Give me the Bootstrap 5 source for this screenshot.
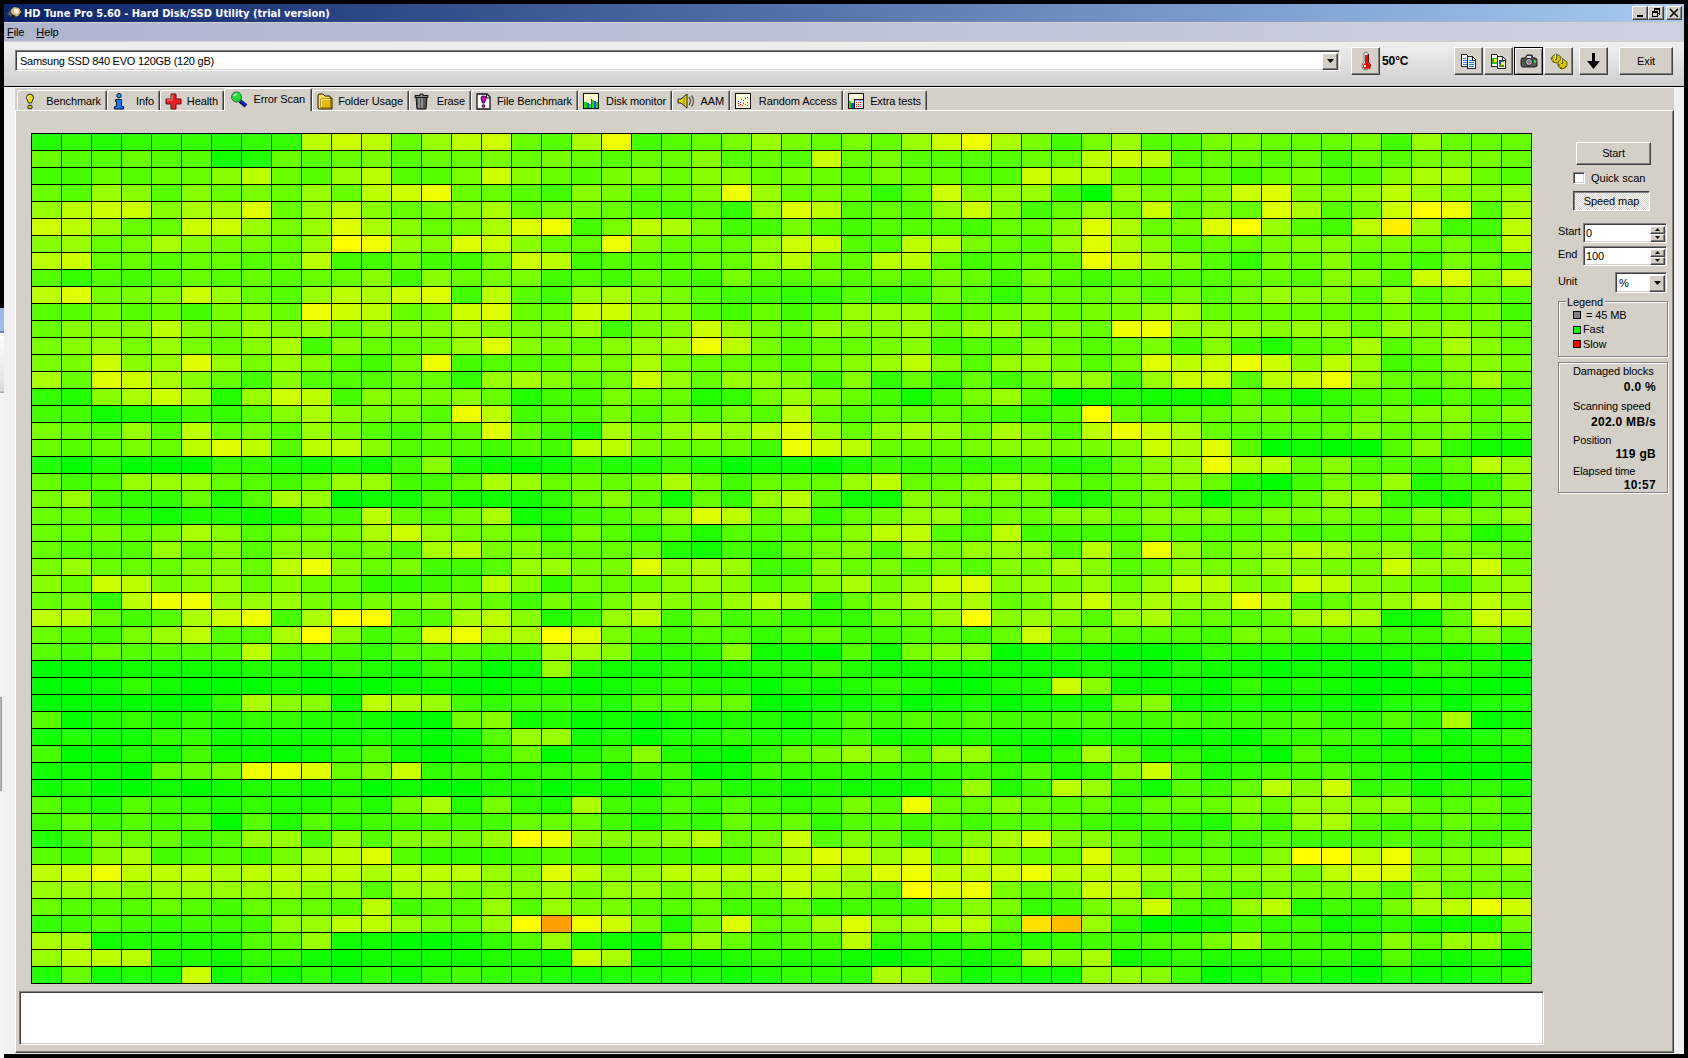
<!DOCTYPE html>
<html lang="en">

<head>
    <meta charset="UTF-8">
    <meta name="viewport" content="width=device-width, initial-scale=1.0">
    <title>HD Tune Pro 5.60 - Hard Disk/SSD Utility (trial version)</title>
    <link href="https://cdn.jsdelivr.net/npm/bootstrap@5.3.3/dist/css/bootstrap.min.css" rel="stylesheet">
    <style>
        body {
            width: 1688px;
            height: 1058px;
            overflow: hidden;
            background: #000;
            color: #000;
            font: 11px/13px "Liberation Sans", Arial, sans-serif;
            letter-spacing: -.1px;
            white-space: nowrap;
        }

        svg {
            display: block;
            flex: none;
        }

        /* sliver of the window behind */
        .behind {
            width: 4px;
            padding-top: 308px;
        }

        .behind-title {
            height: 25px;
            background: linear-gradient(#9ab8e6, #a3bde6 90%, #6d83b3 92%);
        }

        .behind-tools {
            height: 60px;
            background: linear-gradient(#fff, #dcdcdc 97%, #a0a0a0 98%);
        }

        .behind-body {
            background: #f3f3f3;
            padding-top: 304px;
        }

        .behind-scroll {
            width: 2px;
            height: 94px;
            background: #b8b8b8;
            border: solid #999;
            border-width: 1px 1px 1px 0;
        }

        .win {
            width: 1680px;
            height: 1050px;
            margin-top: 4px;
            background: #f0f0f0;
        }

        .titlebar {
            height: 19px;
            padding: 0 2px 0 3px;
            background: linear-gradient(90deg, #0a246a, #a6caf0);
            border-bottom: 1px solid #d4d0c8;
            color: #fff;
            font: bold 11px/17px "DejaVu Sans Condensed", "DejaVu Sans", sans-serif;
        }

        .titlebar-text {
            letter-spacing: .01px;
            padding: 1px 0 0 3px;
        }

        .menubar {
            height: 19px;
            padding: 3px 4px 0 3px;
            background: linear-gradient(90deg, #aeb5cd, #cdd1df);
            border-bottom: 1px solid #d4d0c8;
            gap: 12px;
            line-height: 13px;
        }

        .toolbar {
            height: 45px;
            padding: 5px 11px 0;
            background: linear-gradient(#f0f0f0, #cfcfcf);
            border-bottom: 1px solid #000;
        }

        .w-btn {
            display: flex;
            flex: none;
            align-items: center;
            justify-content: center;
            padding: 0;
            background: #d4d0c8;
            border: 1px solid;
            border-color: #fff #404040 #404040 #fff;
            box-shadow: inset -1px -1px #808080;
            color: #000;
            font: inherit;
            letter-spacing: inherit;
        }

        .w-caption {
            width: 16px;
            height: 14px;
        }

        .w-close {
            margin-left: 2px;
        }

        .w-tool {
            width: 29px;
            height: 28px;
        }

        .w-tool.current {
            border-color: #000;
            box-shadow: inset 1px 1px #fff, inset -1px -1px #808080;
        }

        .w-field {
            flex: none;
            background: #fff;
            border: 1px solid;
            border-color: #808080 #fff #fff #808080;
            box-shadow: inset 1px 1px #404040, inset -1px -1px #d4d0c8;
        }

        .drive {
            width: 1325px;
            height: 21px;
            margin-top: 3px;
            padding: 2px 1px 1px 4px;
            letter-spacing: -.25px;
        }

        .drop {
            width: 16px;
            height: 17px;
        }

        .temp-btn {
            margin-left: 11px;
        }

        .temp {
            width: 29px;
            padding: 8px 0 0 2px;
            font-weight: bold;
            font-size: 12px;
            letter-spacing: -.1px;
        }

        .tool-set {
            gap: 1px;
            margin-left: 45px;
        }

        .save-btn {
            margin: 0 11px 0 6px;
            padding-right: 1px;
        }

        .exit-btn {
            width: 54px;
            height: 28px;
        }

        .tabs {
            display: grid;
            grid-template-columns: 90px 53px 64px 88px 97px 62px 107px 94px 58px 113px 84px;
            align-items: end;
            height: 23px;
            margin: 0 10px 0 11px;
            padding-left: 2px;
            background: #d4d0c8;
            border-top: 1px solid #f4f4f4;
        }

        .w-tab {
            height: 20px;
            padding: 1px 5px 0 4px;
            border: 1px solid;
            border-color: #fff #404040 #fff #fff;
            border-bottom: 0;
            border-radius: 3px 2px 0 0;
            box-shadow: inset -1px 0 #808080;
        }

        .w-tab.active {
            height: 23px;
            margin-bottom: -1px;
            padding: 0 6px 2px 5px;
            background: #d4d0c8;
        }

        .panel-3d {
            height: 943px;
            margin: 0 10px 0 11px;
            padding: 22px 0 0 3px;
            gap: 14px;
            background: #d4d0c8;
            border: 1px solid;
            border-color: #fff #404040 #404040 #fff;
            box-shadow: inset -1px -1px #808080;
        }

        .scan-map {
            display: grid;
            grid-template-columns: repeat(50, 29px);
            grid-auto-rows: 16px;
            gap: 1px;
            width: 1501px;
            margin-left: 12px;
            padding: 1px;
            background: #000;
        }

        .memo {
            width: 1525px;
            height: 54px;
            margin-top: 7px;
        }

        .side {
            width: 110px;
            padding-top: 9px;
        }

        .side-btn {
            width: 75px;
            height: 23px;
            margin-left: 18px;
        }

        .quick {
            margin: 7px 0 7px 15px;
            gap: 6px;
            height: 12px;
            letter-spacing: 0;
        }

        .check-box {
            width: 12px;
            height: 12px;
        }

        .speed {
            width: 77px;
            height: 20px;
            margin: 0 0 12px 15px;
            background: repeating-conic-gradient(#fff 0 25%, #d4d0c8 0 50%) 0 0 / 2px 2px;
            border-color: #404040 #fff #fff #404040;
            box-shadow: inset 1px 1px #808080;
        }

        .range-row {
            margin-bottom: 3px;
            padding-right: 1px;
        }

        .range-row > span {
            padding-top: 2px;
        }

        .num {
            width: 84px;
            height: 20px;
            padding: 2px 1px 1px 2px;
        }

        .spin {
            width: 15px;
            height: 8px;
        }

        .unit {
            width: 52px;
            height: 21px;
            margin-top: 3px;
            padding: 2px 1px 1px 3px;
        }

        .group {
            border: 1px solid #808080;
            box-shadow: 1px 1px #fff, inset 1px 1px #fff;
        }

        .legend-group {
            height: 56px;
            margin-top: 8px;
            padding-left: 14px;
        }

        .legend-title {
            width: 39px;
            height: 12px;
            margin: -6px 0 0 -7px;
            padding-left: 1px;
            line-height: 13px;
            background: #d4d0c8;
        }

        .legend-row {
            height: 14.5px;
            gap: 2px;
        }

        .swatch {
            width: 8px;
            height: 8px;
            border: 1px solid #000;
        }

        .swatch-block {
            margin-right: 3px;
            background: #808080;
        }

        .swatch-fast {
            background: #0f0;
        }

        .swatch-slow {
            background: #f00;
        }

        .stats {
            display: grid;
            grid-template-rows: 16px 19px 16px 18px 14px 17px 14px 13px;
            height: 131px;
            margin-top: 5px;
            padding: 2px 11px 0 14px;
        }

        .stats b {
            text-align: right;
            font-size: 12px;
            letter-spacing: .3px;
        }
    </style>
</head>

<body class="d-flex">
    <div class="behind d-flex flex-column">
        <div class="behind-title"></div>
        <div class="behind-tools"></div>
        <div class="behind-body flex-grow-1">
            <div class="behind-scroll"></div>
        </div>
    </div>

    <div class="win">
        <div class="titlebar d-flex align-items-center">
            <svg width="14" height="14" viewBox="0 0 14 14">
                <path d="M0 8l5-6 4 2-5 7z" fill="#555" />
                <path d="M4 4l3-3 5 1 2 4-3 4-4 1-2-3z" fill="#e0b878" />
                <path d="M7 3l4 0 1 3-3 2-2-2z" fill="#fff0d0" />
                <path d="M5 8l4 2-3 3-2-1z" fill="#222" />
            </svg>
            <span class="titlebar-text flex-grow-1">HD Tune Pro 5.60 - Hard Disk/SSD Utility (trial version)</span>
            <div class="d-flex">
                <button class="w-btn w-caption" aria-label="Minimize"><svg width="12" height="10" shape-rendering="crispEdges"><path d="M3 7h6v2H3z" /></svg></button>
                <button class="w-btn w-caption" aria-label="Restore"><svg width="12" height="10" shape-rendering="crispEdges" fill="none" stroke="#000"><path d="M4 1.500h6M4 .5h6M4.500 1v2M9.500 1v5.500M8 5.500h2M2 4.500h6M2 3.500h6M2.500 4v5M7.500 4v5M2 8.500h6" /></svg></button>
                <button class="w-btn w-caption w-close" aria-label="Close"><svg width="12" height="10" stroke="#000" stroke-width="1.600"><path d="M2 1l8 8M10 1l-8 8" /></svg></button>
            </div>
        </div>

        <div class="menubar d-flex">
            <span><u>F</u>ile</span>
            <span><u>H</u>elp</span>
        </div>

        <div class="toolbar d-flex align-items-start">
            <div class="w-field drive d-flex align-items-center">
                <span class="flex-grow-1">Samsung SSD 840 EVO 120GB (120 gB)</span>
                <div class="w-btn drop"><svg width="7" height="4"><path d="M0 0h7L3.500 4z" /></svg></div>
            </div>
            <button class="w-btn w-tool temp-btn" aria-label="Temperature">
                <svg width="12" height="20" viewBox="0 0 12 20">
                    <path d="M4 2q2-2 4 0v9q3 2 2 5-2 3-4 3-4 0-4-4 0-2 2-4z" fill="#eee" stroke="#777" />
                    <path d="M5 4h3v8q2 1 2 3-1 3-4 3-3 0-3-3 0-2 2-3z" fill="#f00" />
                    <path d="M8.500 3v8l2 3-1 4" fill="none" stroke="#300" />
                    <path d="M4 14h2v2H4z" fill="#fff" />
                </svg>
            </button>
            <span class="temp">50°C</span>
            <div class="d-flex tool-set">
                <button class="w-btn w-tool" aria-label="Copy text">
                    <svg width="17" height="17" viewBox="0 0 17 17" shape-rendering="crispEdges">
                        <path d="M1.500 1.500h5l3 3v9h-8z" fill="#fff" stroke="#222" />
                        <path d="M3 5h3M3 7h4M3 9h4M3 11h4" stroke="#28f" />
                        <path d="M7.500 3.500h5l3 3v9h-8z" fill="#fff" stroke="#222" />
                        <path d="M12.500 3v4h3" fill="none" stroke="#222" />
                        <path d="M9 7.500h3M9 9.500h5M9 11.500h5M9 13.500h5" stroke="#17e" />
                    </svg>
                </button>
                <button class="w-btn w-tool" aria-label="Copy picture">
                    <svg width="17" height="17" viewBox="0 0 17 17" shape-rendering="crispEdges">
                        <path d="M1.500 1.500h5l3 3v9h-8z" fill="#fff" stroke="#222" />
                        <path d="M2 5h5v6H2z" fill="#2b2" />
                        <path d="M4 6h3v3H4z" fill="#ff0" />
                        <path d="M7.500 3.500h5l3 3v9h-8z" fill="#fff" stroke="#222" />
                        <path d="M12.500 3v4h3" fill="none" stroke="#222" />
                        <path d="M9 8h5v6H9z" fill="#1b1" />
                        <path d="M9 7h3v4H9z" fill="#14f" />
                        <path d="M11 9h3v3h-3z" fill="#ff0" />
                        <path d="M12 12h2v2h-2z" fill="#f30" />
                    </svg>
                </button>
                <button class="w-btn w-tool current" aria-label="Screenshot">
                    <svg width="18" height="15" viewBox="0 0 18 15">
                        <path d="M5 4l2-3h5l1 3h3l1 2v6l-2 1H2l-1-2V6l1-2z" fill="#555" stroke="#222" />
                        <path d="M7 2h4v2H7z" fill="#ddd" />
                        <circle cx="9" cy="8" r="3.500" fill="#bbb" stroke="#222" />
                        <circle cx="9" cy="8" r="1.800" fill="#777" />
                        <path d="M14 6h2v3h-2z" fill="#2d4" />
                    </svg>
                </button>
                <button class="w-btn w-tool" aria-label="Options">
                    <svg width="18" height="17" viewBox="0 0 18 17">
                        <path d="M2 4l2-2 2-1 4 2 1 3-1 3-3 1-4-1-2-3z" fill="#d8c800" stroke="#6b6000" />
                        <path d="M8 9l2-2 3-1 4 3 0 4-2 2-4 1-3-3z" fill="#d8c800" stroke="#6b6000" />
                        <path d="M1 5h2M3 9l1-1M11 4l-1 1M8 12h2M11 16v-2M16 14l-1-1" stroke="#6b6000" stroke-width="1.500" />
                        <path d="M6 1v6M12 5v6" stroke="#555" stroke-width="2" />
                        <path d="M5.500 1v5M11.500 5v5" stroke="#ddd" />
                    </svg>
                </button>
            </div>
            <button class="w-btn w-tool save-btn" aria-label="Save">
                <svg width="14" height="17"><path d="M6 0h3v8h5l-6.500 8L1 8h5z" /></svg>
            </button>
            <button class="w-btn exit-btn">Exit</button>
        </div>

        <div class="tabs">
            <div class="w-tab d-flex align-items-center justify-content-between">
                <svg width="18" height="17" viewBox="0 0 18 17">
                    <path d="M4.500 5q0-4 3.500-4t3.500 4L9.500 10h-3z" fill="#e8e000" stroke="#222" />
                    <path d="M6 3v3" stroke="#fff" />
                    <ellipse cx="8" cy="14" rx="2.300" ry="1.800" fill="#d8d000" stroke="#222" />
                </svg>
                <span>Benchmark</span>
            </div>
            <div class="w-tab d-flex align-items-center justify-content-between">
                <svg width="14" height="17" viewBox="0 0 14 17">
                    <circle cx="7" cy="2.700" r="2.200" fill="#29f" stroke="#013" />
                    <path d="M3.500 6.500h6v7h2v2.500h-9v-2.500h2V8.500h-1z" fill="#17f" stroke="#013" />
                </svg>
                <span>Info</span>
            </div>
            <div class="w-tab d-flex align-items-center justify-content-between">
                <svg width="17" height="17" viewBox="0 0 17 17">
                    <path d="M6 1h5v5h5v5h-5v5H6v-5H1V6h5z" fill="#e22" stroke="#611" />
                    <path d="M7 2v5H2" fill="none" stroke="#f88" />
                </svg>
                <span>Health</span>
            </div>
            <div class="w-tab active d-flex align-items-center justify-content-between">
                <svg width="18" height="17" viewBox="0 0 18 17">
                    <path d="M10 10l6 5" stroke="#013" stroke-width="4" />
                    <path d="M10.500 10l5 4.500" stroke="#12e" stroke-width="2" />
                    <circle cx="6.500" cy="6" r="5" fill="#2d3" stroke="#174" />
                    <path d="M4 5q1-2 3-2" fill="none" stroke="#cfc" stroke-width="1.500" />
                </svg>
                <span>Error Scan</span>
            </div>
            <div class="w-tab d-flex align-items-center justify-content-between">
                <svg width="16" height="17" viewBox="0 0 16 17">
                    <path d="M1 15V2l1-1h4l2 2h5v2h2v11H2z" fill="#fd5" stroke="#221a00" />
                    <path d="M4 6h10v9H4z" fill="#e8b818" stroke="#765200" />
                    <path d="M4.500 14V6.500H13" fill="none" stroke="#ffec90" />
                </svg>
                <span>Folder Usage</span>
            </div>
            <div class="w-tab d-flex align-items-center justify-content-between">
                <svg width="15" height="17" viewBox="0 0 15 17">
                    <path d="M2 4h11l-1 12H3z" fill="#555" stroke="#111" />
                    <path d="M5 5v10M8 5v10" stroke="#ccc" />
                    <path d="M1 2.500h5V1h3v1.500h5V4.500H1z" fill="#888" stroke="#111" />
                </svg>
                <span>Erase</span>
            </div>
            <div class="w-tab d-flex align-items-center justify-content-between">
                <svg width="15" height="17" viewBox="0 0 15 17">
                    <path d="M1 1h10l3 3v12H1z" fill="#fff" stroke="#111" stroke-width="1.300" />
                    <path d="M10.500 1v4H14" fill="none" stroke="#111" />
                    <path d="M5 5q0-2 2.500-2T10 5l-1.500 5h-2z" fill="#d0c" stroke="#303" />
                    <circle cx="7.500" cy="13" r="1.500" fill="#b0a" stroke="#303" stroke-width=".7" />
                </svg>
                <span>File Benchmark</span>
            </div>
            <div class="w-tab d-flex align-items-center justify-content-between">
                <svg width="17" height="17" viewBox="0 0 17 17" shape-rendering="crispEdges">
                    <path d="M.5 .5h15v15H.5z" fill="#ffc" stroke="#111" />
                    <path d="M1 9h3v6H1zM6 11h2v4H6zM9 7h2v8H9zM13 9h2v6h-2z" fill="#1d1" />
                    <path d="M4 10h2v5H4zM8 6h1v9H8zM11 8h2v7h-2z" fill="#24e" />
                </svg>
                <span>Disk monitor</span>
            </div>
            <div class="w-tab d-flex align-items-center justify-content-between">
                <svg width="18" height="17" viewBox="0 0 18 17">
                    <path d="M1 6h3l6-5v14l-6-5H1z" fill="#e8d800" stroke="#222" />
                    <path d="M7 4v8" stroke="#887800" />
                    <path d="M12 4q3 4 0 8M14.500 2.500q4 5.500 0 11" fill="none" stroke="#555" stroke-width="1.300" />
                </svg>
                <span>AAM</span>
            </div>
            <div class="w-tab d-flex align-items-center justify-content-between">
                <svg width="17" height="17" viewBox="0 0 17 17" shape-rendering="crispEdges">
                    <path d="M.5 .5h15v15H.5z" fill="#ffd" stroke="#111" />
                    <path d="M3 8h1v1H3zM6 6h1v1H6zM8 7h1v1H8zM10 5h1v1h-1zM12 4h1v1h-1zM5 9h1v1H5z" fill="#24e" />
                    <path d="M3 12h1v1H3zM5 11h1v1H5zM7 12h1v1H7zM8 10h1v1H8zM10 11h1v1h-1zM12 9h1v1h-1zM12 12h1v1h-1zM3 10h1v1H3z" fill="#e22" />
                </svg>
                <span>Random Access</span>
            </div>
            <div class="w-tab d-flex align-items-center justify-content-between">
                <svg width="17" height="17" viewBox="0 0 17 17" shape-rendering="crispEdges">
                    <path d="M.5 .5h15v15H.5z" fill="#ffd" stroke="#111" />
                    <path d="M1 8h2v7H1z" fill="#1d1" />
                    <path d="M3 10h3v5H3z" fill="#24e" />
                    <path d="M6.500 6.500h9v9h-9z" fill="#fff" stroke="#111" />
                    <path d="M7 7h8v1H7z" fill="#99f" />
                    <path d="M8 9.500h6M8 11.500h6M8 13.500h6" stroke="#d33" stroke-dasharray="1 1" />
                </svg>
                <span>Extra tests</span>
            </div>
        </div>

        <div class="panel-3d d-flex">
            <div>
                <div class="scan-map" id="scanMap"></div>
                <div class="w-field memo"></div>
            </div>

            <div class="side">
                <button class="w-btn side-btn">Start</button>
                <div class="quick d-flex align-items-center">
                    <div class="w-field check-box"></div>
                    <span>Quick scan</span>
                </div>
                <button class="w-btn speed">Speed map</button>

                <div class="range-row d-flex justify-content-between">
                    <span>Start</span>
                    <div class="w-field num d-flex align-items-center justify-content-between">
                        <span>0</span>
                        <div>
                            <div class="w-btn spin"><svg width="5" height="3"><path d="M0 3h5L2.500 0z" /></svg></div>
                            <div class="w-btn spin"><svg width="5" height="3"><path d="M0 0h5L2.500 3z" /></svg></div>
                        </div>
                    </div>
                </div>
                <div class="range-row d-flex justify-content-between">
                    <span>End</span>
                    <div class="w-field num d-flex align-items-center justify-content-between">
                        <span>100</span>
                        <div>
                            <div class="w-btn spin"><svg width="5" height="3"><path d="M0 3h5L2.500 0z" /></svg></div>
                            <div class="w-btn spin"><svg width="5" height="3"><path d="M0 0h5L2.500 3z" /></svg></div>
                        </div>
                    </div>
                </div>
                <div class="range-row d-flex justify-content-between">
                    <span class="mt-1">Unit</span>
                    <div class="w-field unit d-flex align-items-center justify-content-between">
                        <span>%</span>
                        <div class="w-btn drop"><svg width="7" height="4"><path d="M0 0h7L3.500 4z" /></svg></div>
                    </div>
                </div>

                <div class="group legend-group">
                    <div class="legend-title">Legend</div>
                    <div class="legend-row d-flex align-items-center"><i class="swatch swatch-block"></i><span>= 45 MB</span></div>
                    <div class="legend-row d-flex align-items-center"><i class="swatch swatch-fast"></i><span>Fast</span></div>
                    <div class="legend-row d-flex align-items-center"><i class="swatch swatch-slow"></i><span>Slow</span></div>
                </div>

                <div class="group stats">
                    <span>Damaged blocks</span>
                    <b>0.0 %</b>
                    <span>Scanning speed</span>
                    <b>202.0 MB/s</b>
                    <span>Position</span>
                    <b>119 gB</b>
                    <span>Elapsed time</span>
                    <b>10:57</b>
                </div>
            </div>
        </div>
    </div>

    <script src="https://cdn.jsdelivr.net/npm/bootstrap@5.3.3/dist/js/bootstrap.bundle.min.js"></script>

    <script>
        // one character per block: 0-f goes from green to yellow, g-j from yellow to orange
        const rows = `
232333233bcb69bc65ae4567976769cea74795577666749666
65565512656756676765668565c67555566bcb566564657776
4465668b659b557c86578688676576655cbb6566467558aa65
65985867696bce665487568e967636c899409778cd889b9889
9bcc8aad69b8678a677654539db5659c84697c686da57cfe5a
cb966cc979da867ade47ba7447545554668da67df954bg944b
8967a87769fe98dc866e86669cc55bb7659da856678877675b
bc6656656b446447cb4555669b76bb64566eca853768564765
5354565656684867745465475565657647545555665885cd8c
bd778c9659bacd4b549a875443353475366675757988595765
557564786ecb67cd66cc985464699956786779a66666676674
6888b87989688898779478c9769889799686ee999899698976
78979768a486679d87689aeb75667845586567484256a57a86
77c89d9798547e455587a76665789b8599757dbcec8b945887
a6dca86485556639a867c96998483636469949cc5bce9667a6
328aca29cb4877862447662379864147950121115313453544
441224358a8775eb455757575b656665435f65667765778868
76595b675975466d642a79a9bd969a97a85beca65556866755
65676bdb5bb8555454bb76664ecb666788778cad5010058311
202000332121482101322420110243433423689ebb685546b9
645999654699446a96767a746669b668a96568862047692438
79433625a9011411136851639b511877661256403369a32156
66431221154b657a124579db69367995768868886877658879
66767a85777ac977637535255568bb55b44446555645557624
6555968588675ab78666721436785979995b6e9689ba895876
79666886be8674459977d9a94486757587a8568779877c99c7
86cb78968663345b83766898568a79cd897969cb87cb876489
673bee99976778764757a879ba368a9a67ac9a99eb5689b9b9
bb645ace4aff55ab8249b4745333669f89859a6656aba116cb
65479b55af845debafd75455356445546c6755547655544685
5465555b554355544aa8333811051788012100132211122120
00011112213213201921121122421111111210211011003321
0013100010001100110123220212320022c811103121000100
0000003a881ba9434432556600112012011178112111022022
50232323322100781201011221354545445544544453353a01
12113311111210159912022322241112110211010334313123
40021411013510136024821036798599313a62312052220111
1110667eed68c343334144014333333435238c523445321000
1200101221201002201103422121113924b931546b8c341332
5325432322427a2732a4353543475e66865646668699895564
4645450525344444666424365635545455543432649a545654
2476645994958879fe9889b67c576468ad8864454544454545
548a45547abd5333454344347adc9c6b766d756658ffbe888b
bcebbbabbbbabbb98db99bbbbcbadebbcebbba98997bdd8877
99989999a8959978897997978b986fde767cb6865777759676
65556546665b4559597755644634446873478c549b2437abec
3454344499bb9769fjec727d66ad9abb6hi930014341231117
aa1222256911001359210796455b342432344557a544486994
9bbb22133101111221ca1112322101212a8a12322233152120
26121c1313131343321222212333a941211998401321021123`;
        const orange = { g: 240, h: 225, i: 190, j: 160 };

        function blockColor(c) {
            if (orange[c]) return `rgb(255,${orange[c]},0)`;
            return `rgb(${parseInt(c, 16) * 17},255,0)`;
        }

        document.getElementById('scanMap').innerHTML = [...rows.replace(/\s/g, '')]
            .map(c => `<div style="background:${blockColor(c)}"></div>`)
            .join('');
    </script>
</body>

</html>
